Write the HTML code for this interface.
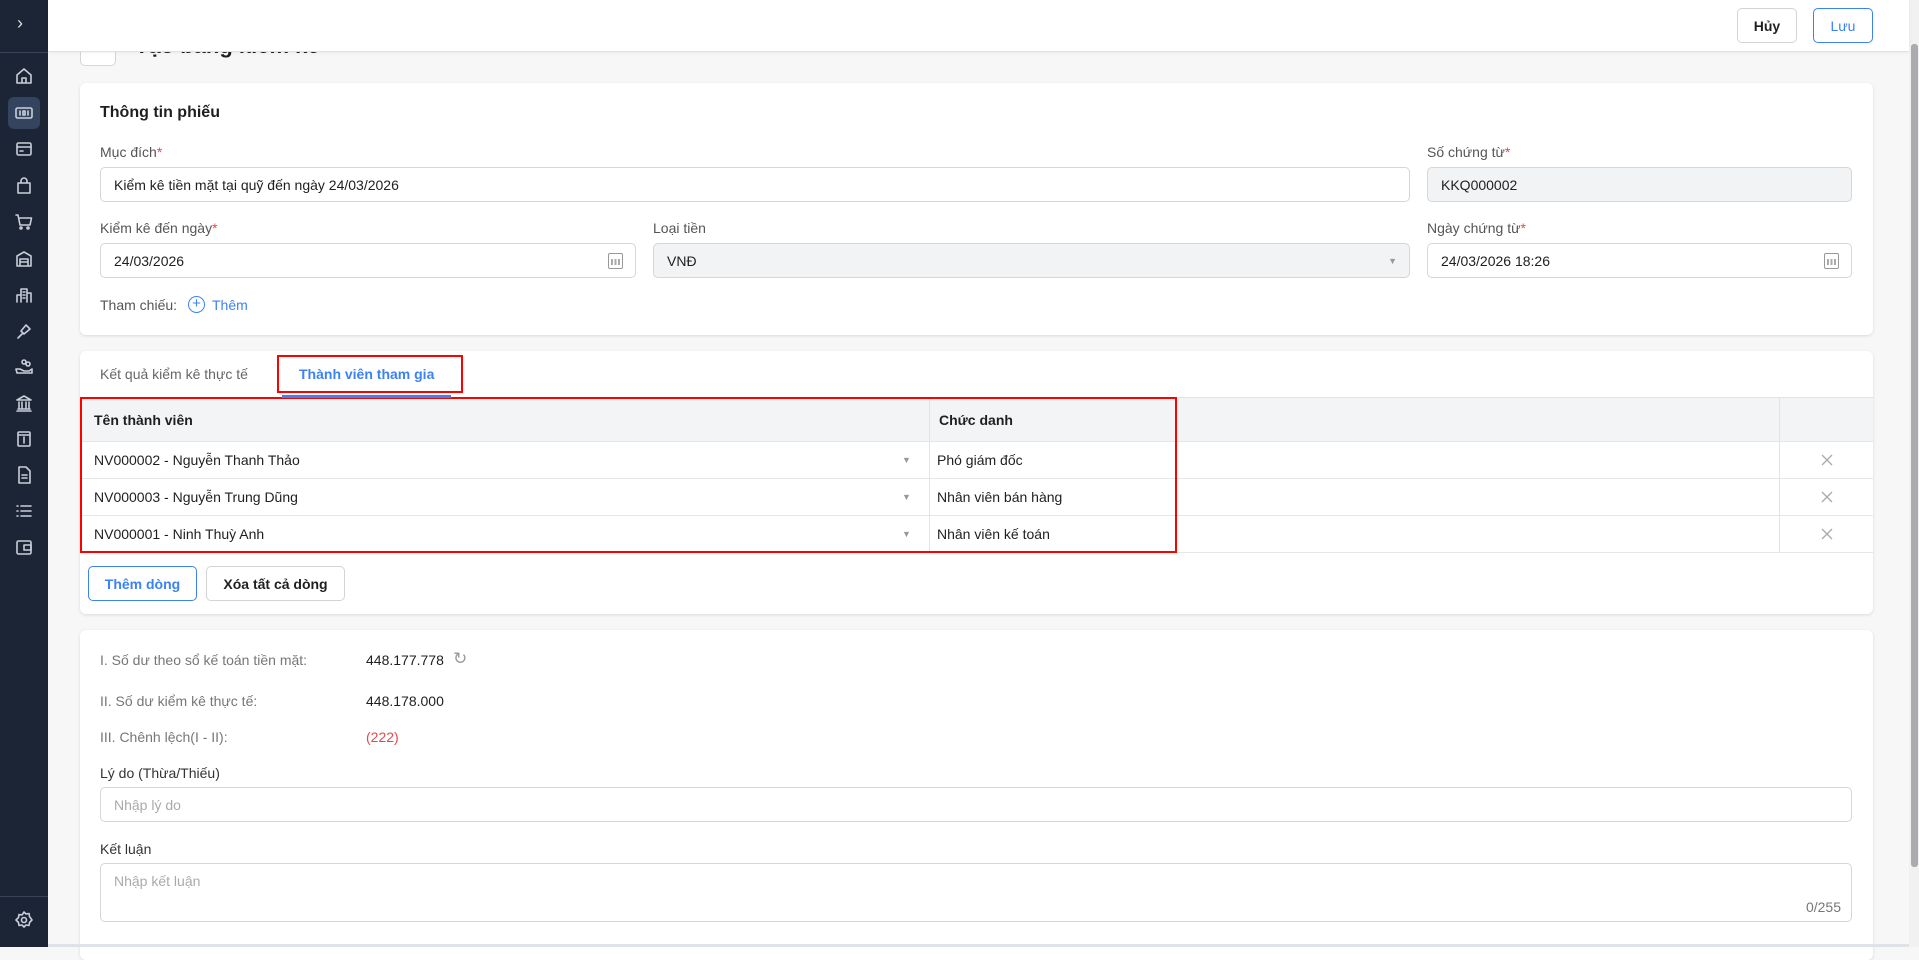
<!DOCTYPE html>
<html><head><meta charset="utf-8"><style>
*{box-sizing:border-box;margin:0;padding:0}
body{width:1919px;height:947px;overflow:hidden;background:#f7f7f7;font-family:"Liberation Sans",sans-serif;font-size:14px;color:#1f1f1f;position:relative}
.abs{position:absolute}
.sb{left:0;top:0;width:48px;height:947px;background:#1c2536}
.sb svg{position:absolute;left:14px;width:20px;height:20px;fill:none;stroke:#c9ced8;stroke-width:1.6;stroke-linecap:round;stroke-linejoin:round}
.hdr{left:48px;top:0;width:1861px;height:52px;background:#fff;border-bottom:1px solid #e2e2e2;box-shadow:0 1px 3px rgba(0,0,0,.06);z-index:5}
.btn{position:absolute;height:35px;border:1px solid #d3d3d3;border-radius:5px;background:#fff;font-size:14px;font-weight:bold;display:flex;align-items:center;justify-content:center}
.card{position:absolute;left:80px;width:1793px;background:#fff;border-radius:6px;box-shadow:0 1px 3px rgba(0,0,0,.12)}
.lbl{position:absolute;color:#555;font-size:14px}
.lbl b{color:#e5484d;font-weight:normal}
.inp{position:absolute;height:35px;border:1px solid #d6d6d6;border-radius:5px;background:#fff;padding-left:13px;display:flex;align-items:center;font-size:14px}
.gray{background:#f2f3f5}
.cal{position:absolute;right:12px;top:9px;width:15px;height:16px;border:1.5px solid #999;border-radius:2px}
.cal:before{content:"";position:absolute;left:2px;right:2px;top:5px;height:6px;background:repeating-linear-gradient(90deg,#aaa 0 2px,transparent 2px 3.5px)}
.row{position:absolute;left:0;width:1793px;height:37px;border-bottom:1px solid #e6e6e6}
.cell{position:absolute;top:0;height:100%;display:flex;align-items:center;font-size:14px}
.x svg{width:12px;height:12px;stroke:#aaa;stroke-width:1.3}
.car{color:#999;font-size:9px}
</style></head><body>
<div class="abs sb">
<div class="abs" style="left:0;top:52px;width:48px;height:1px;background:#3a4457"></div>
<div class="abs" style="left:17px;top:13px;color:#ddd;font-size:18px">›</div>
<div class="abs" style="left:8px;top:97px;width:32px;height:32px;background:#34435e;border-radius:6px"></div>
<svg style="top:66px" viewBox="0 0 20 20"><path d="M3 9 10 3l7 6v8H3z M8 17v-5h4v5"/></svg>
<svg style="top:103px" viewBox="0 0 20 20"><rect x="2" y="5" width="16" height="10" rx="1.5"/><path d="M6 8v4M9 8h2v4H9zM14 8v4"/></svg>
<svg style="top:139px" viewBox="0 0 20 20"><rect x="3" y="4" width="14" height="12" rx="1.5"/><path d="M3 8h14M6 12h3"/></svg>
<svg style="top:176px" viewBox="0 0 20 20"><path d="M4 7h12v10H4zM7 7V5a3 3 0 0 1 6 0v2"/></svg>
<svg style="top:212px" viewBox="0 0 20 20"><path d="M2 3h2l2 10h10l1.5-7H6"/><circle cx="7" cy="16" r="1"/><circle cx="14" cy="16" r="1"/></svg>
<svg style="top:249px" viewBox="0 0 20 20"><path d="M3 17V7l7-4 7 4v10zM6 17v-7h8v7M6 13h8"/></svg>
<svg style="top:285px" viewBox="0 0 20 20"><path d="M3 17V10h4v7M7 17V4h6v13M13 17V8h4v9M9 7h2M9 10h2M9 13h2"/></svg>
<svg style="top:321px" viewBox="0 0 20 20"><path d="M4 17l5-5M9 12l-2-2 5-6 4 4-6 5z"/></svg>
<svg style="top:357px" viewBox="0 0 20 20"><circle cx="10" cy="5" r="2"/><circle cx="14" cy="7" r="2"/><path d="M2 12h4l4 2h5l3-2v4H3z"/></svg>
<svg style="top:393px" viewBox="0 0 20 20"><path d="M3 7l7-4 7 4zM4 16h12M3 18h14M5 9v6M8 9v6M12 9v6M15 9v6"/></svg>
<svg style="top:429px" viewBox="0 0 20 20"><rect x="4" y="3" width="12" height="14" rx="1"/><path d="M4 6h12M10 8v6"/></svg>
<svg style="top:465px" viewBox="0 0 20 20"><path d="M5 2h7l4 4v12H5zM8 10h5M8 13h5"/></svg>
<svg style="top:501px" viewBox="0 0 20 20"><path d="M7 5h10M7 10h10M7 15h10M3 5h1M3 10h1M3 15h1"/></svg>
<svg style="top:537px" viewBox="0 0 20 20"><rect x="3" y="4" width="14" height="13" rx="1.5"/><rect x="10" y="8" width="7" height="5"/></svg>
<div class="abs" style="left:0;top:896px;width:48px;height:1px;background:#3a4457"></div>
<svg style="top:910px" viewBox="0 0 20 20"><circle cx="10" cy="10" r="2.5"/><path d="M10 2l2 2 3-.5.5 3L18 10l-2.5 2.5-.5 3-3-.5-2 2-2-2-3 .5-.5-3L2 10l2.5-2.5.5-3 3 .5z"/></svg>
</div>
<div class="abs hdr">
<div class="btn" style="left:1689px;top:8px;width:60px">Hủy</div>
<div class="btn" style="left:1765px;top:8px;width:60px;border-color:#3b82f6;color:#3b82f6;font-weight:normal">Lưu</div>
</div>
<div class="abs" style="left:80px;top:30px;width:36px;height:36px;border:1px solid #d6d6d6;border-radius:5px;background:#fff"></div>
<div class="abs" style="left:135px;top:33px;font-size:22px;font-weight:bold">Tạo bảng kiểm kê</div>
<div class="abs" style="left:1909px;top:0;width:10px;height:947px;background:#f1f1f1"></div>
<div class="abs" style="left:1911px;top:44px;width:7px;height:823px;background:#a9abaf;border-radius:3px"></div>
<div class="abs" style="left:48px;top:944px;width:1861px;height:3px;background:#dfe3e8;z-index:3"></div>

<div class="card" style="top:83px;height:252px">
<div class="abs" style="left:20px;top:21px;font-size:16px;font-weight:bold">Thông tin phiếu</div>
<div class="lbl" style="left:20px;top:61px">Mục đích<b>*</b></div>
<div class="inp" style="left:20px;top:84px;width:1310px">Kiểm kê tiền mặt tại quỹ đến ngày 24/03/2026</div>
<div class="lbl" style="left:1347px;top:61px">Số chứng từ<b>*</b></div>
<div class="inp gray" style="left:1347px;top:84px;width:425px">KKQ000002</div>
<div class="lbl" style="left:20px;top:137px">Kiểm kê đến ngày<b>*</b></div>
<div class="inp" style="left:20px;top:160px;width:536px">24/03/2026<span class="cal"></span></div>
<div class="lbl" style="left:573px;top:137px">Loại tiền</div>
<div class="inp gray" style="left:573px;top:160px;width:757px">VNĐ<span class="car" style="position:absolute;right:12px">▼</span></div>
<div class="lbl" style="left:1347px;top:137px">Ngày chứng từ<b>*</b></div>
<div class="inp" style="left:1347px;top:160px;width:425px">24/03/2026 18:26<span class="cal"></span></div>
<div class="lbl" style="left:20px;top:214px">Tham chiếu:</div>
<div class="abs" style="left:108px;top:213px;width:17px;height:17px;border:1.5px solid #3b82f6;border-radius:50%;color:#3b82f6;font-size:15px;line-height:13px;text-align:center">+</div>
<div class="abs" style="left:132px;top:214px;color:#3b82f6">Thêm</div>
</div>

<div class="card" style="top:351px;height:263px">
<div class="abs" style="left:20px;top:15px;color:#666">Kết quả kiểm kê thực tế</div>
<div class="abs" style="left:219px;top:15px;color:#3b82f6;font-weight:bold">Thành viên tham gia</div>
<div class="abs" style="left:202px;top:44px;width:169px;height:3px;background:#3b82f6;z-index:2"></div>
<div class="abs" style="left:197px;top:4px;width:186px;height:38px;border:2px solid #f00"></div>
<div class="row" style="top:46px;height:45px;background:#f3f4f6;border-top:1px solid #e3e3e3">
<div class="cell" style="left:14px;font-weight:bold">Tên thành viên</div>
<div class="cell" style="left:849px;border-left:1px solid #e3e3e3;padding-left:9px;font-weight:bold">Chức danh</div>
<div class="cell" style="left:1699px;border-left:1px solid #e3e3e3"></div>
</div>
<div class="row" style="top:91px"><div class="cell" style="left:14px">NV000002 - Nguyễn Thanh Thảo</div><div class="cell car" style="left:822px">▼</div><div class="cell" style="left:849px;border-left:1px solid #e3e3e3;padding-left:7px">Phó giám đốc</div><div class="cell x" style="left:1699px;border-left:1px solid #e3e3e3;width:94px;justify-content:center"><svg viewBox="0 0 12 12"><path d="M1 1l10 10M11 1 1 11"/></svg></div></div>
<div class="row" style="top:128px"><div class="cell" style="left:14px">NV000003 - Nguyễn Trung Dũng</div><div class="cell car" style="left:822px">▼</div><div class="cell" style="left:849px;border-left:1px solid #e3e3e3;padding-left:7px">Nhân viên bán hàng</div><div class="cell x" style="left:1699px;border-left:1px solid #e3e3e3;width:94px;justify-content:center"><svg viewBox="0 0 12 12"><path d="M1 1l10 10M11 1 1 11"/></svg></div></div>
<div class="row" style="top:165px"><div class="cell" style="left:14px">NV000001 - Ninh Thuỳ Anh</div><div class="cell car" style="left:822px">▼</div><div class="cell" style="left:849px;border-left:1px solid #e3e3e3;padding-left:7px">Nhân viên kế toán</div><div class="cell x" style="left:1699px;border-left:1px solid #e3e3e3;width:94px;justify-content:center"><svg viewBox="0 0 12 12"><path d="M1 1l10 10M11 1 1 11"/></svg></div></div>
<div class="abs" style="left:0;top:46px;width:1097px;height:156px;border:2px solid #f00"></div>
<div class="btn" style="left:8px;top:215px;width:109px;border-color:#3b82f6;color:#3b82f6">Thêm dòng</div>
<div class="btn" style="left:126px;top:215px;width:139px">Xóa tất cả dòng</div>
</div>

<div class="card" style="top:630px;height:330px">
<div class="lbl" style="left:20px;top:22px;color:#777">I. Số dư theo sổ kế toán tiền mặt:</div>
<div class="abs" style="left:286px;top:22px">448.177.778</div>
<div class="abs" style="left:373px;top:19px;color:#999;font-size:17px">↻</div>
<div class="lbl" style="left:20px;top:63px;color:#777">II. Số dư kiểm kê thực tế:</div>
<div class="abs" style="left:286px;top:63px">448.178.000</div>
<div class="lbl" style="left:20px;top:99px;color:#777">III. Chênh lệch(I - II):</div>
<div class="abs" style="left:286px;top:99px;color:#e5484d">(222)</div>
<div class="lbl" style="left:20px;top:135px;color:#333">Lý do (Thừa/Thiếu)</div>
<div class="inp" style="left:20px;top:157px;width:1752px;color:#aaa">Nhập lý do</div>
<div class="lbl" style="left:20px;top:211px;color:#333">Kết luận</div>
<div class="inp" style="left:20px;top:233px;width:1752px;height:59px;align-items:flex-start;padding-top:9px;color:#aaa">Nhập kết luận<span style="position:absolute;right:10px;bottom:6px;color:#777">0/255</span></div>
</div>
</body></html>
